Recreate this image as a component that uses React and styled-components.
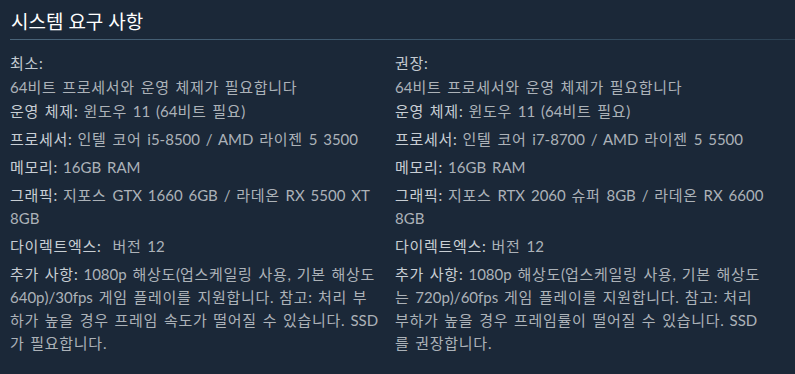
import React from "react";
import styled, { createGlobalStyle } from "styled-components";

const GlobalStyle = createGlobalStyle`
  html, body {
    margin: 0;
    padding: 0;
    background: #1b2838;
  }
  body {
    font-family: Lato, "Noto Sans CJK KR", Arial, sans-serif;
  }
`;

const Section = styled.div`
  width: 795px;
  height: 374px;
  box-sizing: border-box;
  padding: 0 0 0 10px;
  background: #1b2838;
  overflow: hidden;
`;

const Title = styled.h2`
  margin: 0;
  padding: 10px 0 5px 1px;
  font-family: "Open Sans", "Noto Sans CJK KR", sans-serif;
  font-size: 19px;
  line-height: 24px;
  font-weight: normal;
  color: #ffffff;
  border-bottom: 1px solid transparent;
  border-image: linear-gradient(to right, #4a6479 0%, #3c566b 50%, #2c4153 100%) 1;
`;

const Columns = styled.div`
  display: grid;
  grid-template-columns: 370px 374px;
  column-gap: 15px;
  margin-top: 12px;
`;

const Column = styled.div`
  display: flex;
  flex-direction: column;
`;

const Heading = styled.div`
  font-size: 15px;
  line-height: 23px;
  color: #c3cad1;
`;

const List = styled.ul`
  list-style: none;
  margin: 0;
  padding: 0;
`;

const Item = styled.li`
  font-size: 15px;
  line-height: 23px;
  word-spacing: 2px;
  color: #acb2b8;
  margin-top: ${({ $gap }) => $gap}px;
`;

const Label = styled.span`
  color: #c8ced4;
`;

// Hangul runs get a touch of tracking so they space out like the original font
const Hangul = styled.span`
  letter-spacing: 0.7px;
`;

const spaced = (str) =>
  str.split(/([\u3131-\u318e\uac00-\ud7a3]+)/).map((part, i) =>
    i % 2 ? <Hangul key={i}>{part}</Hangul> : part
  );

const minimum = [
  { text: "64비트 프로세서와 운영 체제가 필요합니다", gap: 1 },
  { label: "운영 체제:", text: " 윈도우 11 (64비트 필요)", gap: 1 },
  { label: "프로세서:", text: " 인텔 코어 i5-8500 / AMD 라이젠 5 3500", gap: 5 },
  { label: "메모리:", text: " 16GB RAM", gap: 5 },
  { label: "그래픽:", text: " 지포스 GTX 1660 6GB / 라데온 RX 5500 XT 8GB", gap: 5 },
  { label: "다이렉트엑스:", text: "\u00a0 버전 12", gap: 5 },
  {
    label: "추가 사항:",
    text: " 1080p 해상도(업스케일링 사용, 기본 해상도 640p)/30fps 게임 플레이를 지원합니다. 참고: 처리 부하가 높을 경우 프레임 속도가 떨어질 수 있습니다. SSD가 필요합니다.",
    gap: 5,
  },
];

const recommended = [
  { text: "64비트 프로세서와 운영 체제가 필요합니다", gap: 1 },
  { label: "운영 체제:", text: " 윈도우 11 (64비트 필요)", gap: 1 },
  { label: "프로세서:", text: " 인텔 코어 i7-8700 / AMD 라이젠 5 5500", gap: 5 },
  { label: "메모리:", text: " 16GB RAM", gap: 5 },
  { label: "그래픽:", text: " 지포스 RTX 2060 슈퍼 8GB / 라데온 RX 6600 8GB", gap: 5 },
  { label: "다이렉트엑스:", text: " 버전 12", gap: 5 },
  {
    label: "추가 사항:",
    text: " 1080p 해상도(업스케일링 사용, 기본 해상도는 720p)/60fps 게임 플레이를 지원합니다. 참고: 처리 부하가 높을 경우 프레임률이 떨어질 수 있습니다. SSD를 권장합니다.",
    gap: 5,
  },
];

const ReqColumn = ({ title, items }) => (
  <Column>
    <Heading>{spaced(title)}</Heading>
    <List>
      {items.map((item, i) => (
        <Item key={i} $gap={item.gap}>
          {item.label && <Label>{spaced(item.label)}</Label>}
          {spaced(item.text)}
        </Item>
      ))}
    </List>
  </Column>
);

export default function App() {
  return (
    <>
      <GlobalStyle />
      <Section lang="ko">
        <Title>시스템 요구 사항</Title>
        <Columns>
          <ReqColumn title="최소:" items={minimum} />
          <ReqColumn title="권장:" items={recommended} />
        </Columns>
      </Section>
    </>
  );
}
